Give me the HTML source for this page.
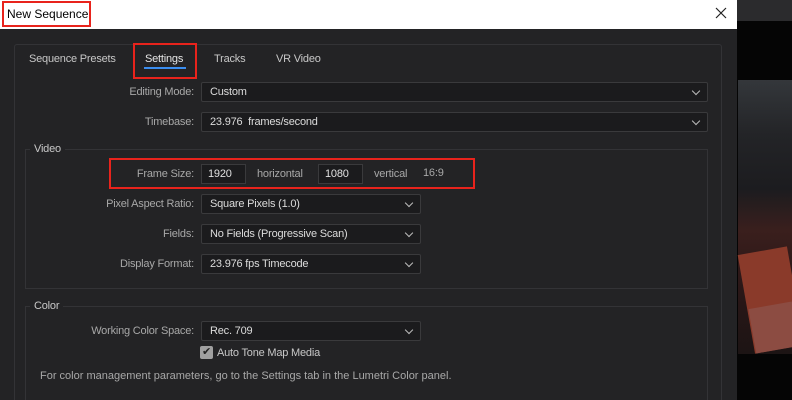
<!DOCTYPE html>
<html><head><meta charset="utf-8"><style>
*{margin:0;padding:0;box-sizing:border-box}
html,body{width:792px;height:400px;overflow:hidden}
body{background:#232325;font-family:"Liberation Sans",sans-serif;font-size:11px;letter-spacing:-0.2px;color:#c8c8c8;position:relative}
.a{position:absolute}
.lbl{position:absolute;text-align:right;width:190px;left:4px;color:#a8a8a8}
.dd{position:absolute;background:#1b1b1d;border:1px solid #3a3a3c;border-radius:2px;height:20px;color:#dcdcdc;padding:3px 0 0 8px}
.dd:after{content:"";position:absolute;right:8px;top:5px;width:5px;height:5px;border-right:1px solid #bbb;border-bottom:1px solid #bbb;transform:rotate(45deg)}
.in{position:absolute;background:#1b1b1d;border:1px solid #3a3a3c;height:20px;color:#e0e0e0;padding:3px 0 0 6px}
.red{position:absolute;border:2px solid #e8231c}
</style></head><body>
<div class="a" style="left:0;top:0;width:737px;height:29px;background:#fff"></div>
<div class="a" style="left:7px;top:7px;color:#000;font-size:12px;letter-spacing:0">New Sequence</div>
<div class="red" style="left:2px;top:1px;width:89px;height:26px"></div>
<svg class="a" style="left:715px;top:7px" width="12" height="12"><path d="M1 1L11 11M11 1L1 11" stroke="#222" stroke-width="1.2"/></svg>
<div class="a" style="left:737px;top:0;width:55px;height:21px;background:#2b2b2d"></div>
<div class="a" style="left:737px;top:21px;width:55px;height:379px;background:#050505"></div>
<div class="a" style="left:738px;top:80px;width:54px;height:274px;background:linear-gradient(180deg,#34373b 0%,#232427 20%,#1c1c1f 40%,#3a1f1d 55%,#2e1818 70%,#1c1414 100%)"></div>
<div class="a" style="left:746px;top:250px;width:50px;height:100px;background:#8a3a2a;transform:rotate(-10deg)"></div>
<div class="a" style="left:752px;top:305px;width:44px;height:45px;background:#8c4c42;transform:rotate(-10deg)"></div>
<div class="a" style="left:14px;top:44px;width:708px;height:370px;border:1px solid #333336;border-radius:3px"></div>
<div class="a" style="left:29px;top:53px">Sequence Presets</div>
<div class="a" style="left:145px;top:53px;color:#e6e6e6">Settings</div>
<div class="a" style="left:144px;top:67px;width:42px;height:2px;background:#3b8ef0"></div>
<div class="a" style="left:214px;top:53px">Tracks</div>
<div class="a" style="left:276px;top:53px">VR Video</div>
<div class="red" style="left:133px;top:43px;width:64px;height:36px"></div>
<div class="lbl" style="top:86px">Editing Mode:</div>
<div class="dd" style="left:201px;top:82px;width:507px">Custom</div>
<div class="lbl" style="top:116px">Timebase:</div>
<div class="dd" style="left:201px;top:112px;width:507px">23.976&nbsp; frames/second</div>
<div class="a" style="left:25px;top:149px;width:683px;height:140px;border:1px solid #333336"></div>
<div class="a" style="left:30px;top:143px;background:#232325;padding:0 4px">Video</div>
<div class="lbl" style="top:168px">Frame Size:</div>
<div class="in" style="left:201px;top:164px;width:45px">1920</div>
<div class="a" style="left:257px;top:168px;color:#a8a8a8">horizontal</div>
<div class="in" style="left:318px;top:164px;width:45px">1080</div>
<div class="a" style="left:374px;top:168px;color:#a8a8a8">vertical</div>
<div class="a" style="left:423px;top:167px;color:#a8a8a8">16:9</div>
<div class="red" style="left:109px;top:158px;width:366px;height:31px"></div>
<div class="lbl" style="top:198px">Pixel Aspect Ratio:</div>
<div class="dd" style="left:201px;top:194px;width:220px">Square Pixels (1.0)</div>
<div class="lbl" style="top:228px">Fields:</div>
<div class="dd" style="left:201px;top:224px;width:220px">No Fields (Progressive Scan)</div>
<div class="lbl" style="top:258px">Display Format:</div>
<div class="dd" style="left:201px;top:254px;width:220px">23.976 fps Timecode</div>
<div class="a" style="left:25px;top:306px;width:683px;height:110px;border:1px solid #333336"></div>
<div class="a" style="left:30px;top:300px;background:#232325;padding:0 4px">Color</div>
<div class="lbl" style="top:325px">Working Color Space:</div>
<div class="dd" style="left:201px;top:321px;width:220px">Rec. 709</div>
<div class="a" style="left:200px;top:346px;width:13px;height:13px;background:#a0a0a0;border-radius:2px;color:#222;font-size:11px;line-height:13px;text-align:center">✔</div>
<div class="a" style="left:217px;top:347px">Auto Tone Map Media</div>
<div class="a" style="left:40px;top:370px;color:#a8a8a8;letter-spacing:0">For color management parameters, go to the Settings tab in the Lumetri Color panel.</div>
</body></html>
